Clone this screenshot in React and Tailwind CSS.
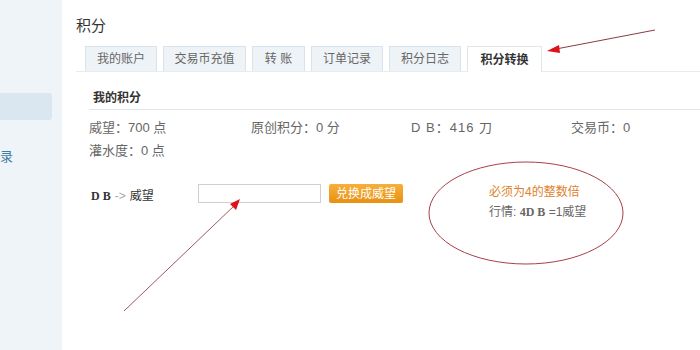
const tabs = ["我的账户", "交易币充值", "转 账", "订单记录", "积分日志", "积分转换"];
const tabWidths = ["w-[72px]", "w-[83px]", "w-[53px]", "w-[72px]", "w-[72px]", "w-[75px]"];

const font = { fontFamily: '"Liberation Sans", "Noto Sans CJK SC", sans-serif' };

export default function App() {
  return (
    <div className="relative flex w-[700px] h-[350px] overflow-hidden bg-white text-[#666]" style={font}>
      {/* Sidebar */}
      <aside className="w-[62px] shrink-0 bg-[#eff4f8] pt-[93px]">
        <div className="h-[27px] w-[52px] rounded-r-[3px] bg-[#dae7f0]" />
        <div className="mt-[30px] text-[13px] leading-none text-[#3d7ea6]">录</div>
      </aside>

      {/* Main */}
      <main className="flex-1 pl-[14px] pt-[16px]">
        <h1 className="text-[15px] leading-[20px] text-[#333]">积分</h1>

        {/* Tabs */}
        <div className="mt-[10px] ml-[9px] flex gap-[6px]">
          {tabs.map((t, i) => {
            const active = i === tabs.length - 1;
            return (
              <div
                key={t}
                className={`${tabWidths[i]} h-[25px] flex items-center justify-center text-[12px] border border-b-0 ${
                  active
                    ? "bg-white border-[#dfe6ec] font-bold text-[#333] relative z-10 h-[26px] -mb-[1px]"
                    : "bg-[#eef3f7] border-[#dbe3ea] text-[#666]"
                }`}
              >
                {t}
              </div>
            );
          })}
        </div>

        {/* Panel */}
        <section className="border-t border-[#e6edf2] pt-[16px]">
          <div className="ml-[13px] border-b border-[#dde6eb] pb-[4px] pl-[4px] text-[12px] font-bold leading-[17px] text-[#333]" style={{ fontFamily: '"Noto Sans CJK SC", serif' }}>
            我的积分
          </div>

          <div className="ml-[13px] mt-[6px] grid grid-cols-[162px_160px_160px_1fr] text-[13px] leading-[23px] text-[#666]">
            <span>威望：700 点</span>
            <span>原创积分：0 分</span>
            <span className="tracking-[1px]">D B：416 刀</span>
            <span>交易币：0</span>
            <span>灌水度：0 点</span>
          </div>

          <div className="ml-[15px] mt-[22px] flex items-start">
            <div className="w-[107px] pt-[6px] text-[12px] leading-none text-[#333]">
              <span className="font-bold" style={{ fontFamily: '"Liberation Serif", serif' }}>D B</span>
              <span className="mx-[4px] text-[#aaa]">-&gt;</span>
              威望
            </div>
            <input
              type="text"
              className="h-[19px] w-[123px] border border-[#cfcfcf] bg-white outline-none"
            />
            <button className="ml-[8px] h-[19px] w-[74px] rounded-[2px] bg-gradient-to-b from-[#f7b03a] to-[#e8900e] text-[12px] leading-none text-white">
              兑换成威望
            </button>
            <div className="ml-[86px] -mt-[2px] text-[12px] leading-[20px]">
              <div className="text-[#e0802a]">必须为4的整数倍</div>
              <div className="text-[#666]">
                行情: <span className="font-bold" style={{ fontFamily: '"Liberation Serif", serif' }}>4D B</span> =1威望
              </div>
            </div>
          </div>
        </section>
      </main>

      {/* Annotations */}
      <svg className="pointer-events-none absolute inset-0" width="700" height="350">
        <ellipse cx="526" cy="213" rx="97" ry="51" fill="none" stroke="#a8404a" strokeWidth="1" />
        <line x1="655" y1="30" x2="556" y2="49" stroke="#8a3a44" strokeWidth="1" />
        <polygon points="547,51 559,45 560,53" fill="#e0101a" />
        <line x1="124" y1="311" x2="235" y2="205" stroke="#9a5a60" strokeWidth="1" />
        <polygon points="240,199 236,210 230,204" fill="#e0101a" />
      </svg>
    </div>
  );
}
